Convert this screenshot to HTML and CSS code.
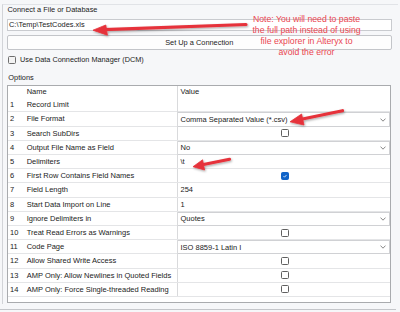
FILE: index.html
```html
<!DOCTYPE html>
<html>
<head>
<meta charset="utf-8">
<link rel="stylesheet" href="styles.css">
</head>
<body>
<div class="page">
  <div class="panel">
    <div class="title">Connect a File or Database</div>
    <div class="input">C:\Temp\TestCodes.xls</div>
    <div class="button">Set Up a Connection</div>
    <div class="check-row"><span class="cb"></span><span>Use Data Connection Manager (DCM)</span></div>
    <div class="section">Options</div>
    <div class="grid">
      <div class="row head"><span class="num"></span><span class="name">Name</span><span class="val">Value</span></div>
      <div class="row"><span class="num">1</span><span class="name">Record Limit</span><span class="val"></span></div>
      <div class="row"><span class="num">2</span><span class="name">File Format</span><span class="val dd"><span>Comma Separated Value (*.csv)</span><svg class="chev" viewBox="0 0 6 4"><polyline points="0.5,0.6 3,3.2 5.5,0.6"/></svg></span></div>
      <div class="row"><span class="num">3</span><span class="name">Search SubDirs</span><span class="val chk"><span class="box"></span></span></div>
      <div class="row"><span class="num">4</span><span class="name">Output File Name as Field</span><span class="val dd"><span>No</span><svg class="chev" viewBox="0 0 6 4"><polyline points="0.5,0.6 3,3.2 5.5,0.6"/></svg></span></div>
      <div class="row"><span class="num">5</span><span class="name">Delimiters</span><span class="val">\t</span></div>
      <div class="row"><span class="num">6</span><span class="name">First Row Contains Field Names</span><span class="val chk"><span class="box on"><svg viewBox="0 0 8 8"><polyline points="2,4.2 3.4,5.6 6,2.6"/></svg></span></span></div>
      <div class="row"><span class="num">7</span><span class="name">Field Length</span><span class="val">254</span></div>
      <div class="row"><span class="num">8</span><span class="name">Start Data Import on Line</span><span class="val">1</span></div>
      <div class="row"><span class="num">9</span><span class="name">Ignore Delimiters in</span><span class="val dd"><span>Quotes</span><svg class="chev" viewBox="0 0 6 4"><polyline points="0.5,0.6 3,3.2 5.5,0.6"/></svg></span></div>
      <div class="row"><span class="num">10</span><span class="name">Treat Read Errors as Warnings</span><span class="val chk"><span class="box"></span></span></div>
      <div class="row"><span class="num">11</span><span class="name">Code Page</span><span class="val dd"><span>ISO 8859-1 Latin I</span><svg class="chev" viewBox="0 0 6 4"><polyline points="0.5,0.6 3,3.2 5.5,0.6"/></svg></span></div>
      <div class="row"><span class="num">12</span><span class="name">Allow Shared Write Access</span><span class="val chk"><span class="box"></span></span></div>
      <div class="row"><span class="num">13</span><span class="name">AMP Only: Allow Newlines in Quoted Fields</span><span class="val chk"><span class="box"></span></span></div>
      <div class="row"><span class="num">14</span><span class="name">AMP Only: Force Single-threaded Reading</span><span class="val chk"><span class="box"></span></span></div>
    </div>
  </div>
  <div class="bottom-line"></div>

  <div class="note">Note: You will need to paste<br>the full path instead of using<br>file explorer in Alteryx to<br>avoid the error</div>

  <svg class="arrows" viewBox="0 0 400 312" width="400" height="312">
    <defs>
      <filter id="sh" x="-20%" y="-50%" width="140%" height="200%">
        <feDropShadow dx="0.8" dy="1.2" stdDeviation="0.8" flood-color="#000" flood-opacity="0.35"/>
      </filter>
    </defs>
    <g filter="url(#sh)" class="arrow">
      <line x1="246" y1="20.5" x2="104" y2="25.6"/>
      <polygon points="93,26.2 107.4,31.2 105.8,21"/>
    </g>
    <g filter="url(#sh)" class="arrow">
      <line x1="342.5" y1="106.7" x2="300" y2="115.5"/>
      <polygon points="290,117.8 304,121 301.6,110"/>
    </g>
    <g filter="url(#sh)" class="arrow">
      <line x1="229.5" y1="155.3" x2="201" y2="161"/>
      <polygon points="193,162.7 204.6,166 202.6,155.8"/>
    </g>
  </svg>
</div>
</body>
</html>
```

FILE: styles.css
```css
* { box-sizing: border-box; }

html, body {
  margin: 0;
  padding: 0;
  width: 400px;
  height: 312px;
  overflow: hidden;
  background: #f6f7f9;
}

.page {
  position: relative;
  width: 400px;
  height: 312px;
  font-family: "Liberation Sans", Arial, sans-serif;
  font-size: 7.4px;
  color: #1b1b1b;
}

.panel {
  margin-top: 4px;
  margin-left: 2px;
  width: 396px;
  height: 300px;
  border-top: 1px solid #e1e3e7;
  border-left: 1px solid #d2d4d8;
  padding-left: 3.5px;
  display: flex;
  flex-direction: column;
}

.title {
  line-height: 9px;
  margin-left: 1px;
}

.input {
  margin-top: 5px;
  width: 385.5px;
  height: 12px;
  border: 1px solid #c9cbcf;
  background: #fff;
  padding-left: 1.5px;
  line-height: 10px;
}

.button {
  margin-top: 4px;
  width: 385.5px;
  height: 15px;
  border: 1px solid #c3c5c9;
  border-radius: 2px;
  background: #fdfdfd;
  text-align: center;
  line-height: 13px;
}

.check-row {
  margin-top: 6px;
  margin-left: 1px;
  height: 8px;
  display: flex;
  align-items: center;
  gap: 4.5px;
  line-height: 8px;
  font-size: 7.3px;
}

.cb {
  width: 8px;
  height: 8px;
  border: 1px solid #6e6e6e;
  border-radius: 1.5px;
  background: #f3f3f3;
}

.section {
  margin-top: 9px;
  margin-left: 1.8px;
  line-height: 9px;
}

.grid {
  margin-top: 3px;
  margin-left: 0.5px;
  width: 384px;
  height: 218px;
  border: 1px solid #a9abae;
  background: #fff;
  font-size: 7.5px;
}

.row {
  display: grid;
  grid-template-columns: 16px 152.5px 1fr;
  height: 14.2px;
  border-bottom: 1px solid #e4e5e7;
  line-height: 13.2px;
}

.row.head {
  height: 12.3px;
  border-bottom: none;
  line-height: 12.3px;
}

.num { padding-left: 2px; }
.name { padding-left: 2.7px; white-space: nowrap; }

.val {
  border-left: 1px solid #d9dadc;
  padding-left: 3px;
  white-space: nowrap;
}

.val.dd {
  display: flex;
  align-items: center;
  justify-content: space-between;
  padding-right: 4px;
  box-shadow: inset 0 1px 0 #d0d1d4, inset -1px 0 0 #d0d1d4, inset 0 -1px 0 #d0d1d4;
  margin-bottom: -1px;
}

.chev {
  width: 6px;
  height: 4px;
  fill: none;
  stroke: #6a6a6a;
  stroke-width: 0.8;
}

.val.chk {
  display: flex;
  align-items: center;
  justify-content: center;
}

.box {
  width: 8px;
  height: 8px;
  border: 1px solid #606060;
  border-radius: 1.5px;
  background: #fff;
  display: flex;
}

.box.on {
  background: #0f63c8;
  border-color: #0f63c8;
}

.box.on svg {
  width: 6px;
  height: 6px;
  fill: none;
  stroke: #fff;
  stroke-width: 1;
}

.bottom-line {
  margin-top: 5px;
  width: 396px;
  border-top: 1px solid #c4c6ca;
}

.note {
  position: absolute;
  left: 236px;
  top: 10.2px;
  width: 141px;
  text-align: center;
  font-size: 8.7px;
  line-height: 11px;
  color: #ea4651;
}

.arrows {
  position: absolute;
  left: 0;
  top: 0;
  pointer-events: none;
}

.arrow line {
  stroke: #e6333b;
  stroke-width: 3.2;
  stroke-linecap: round;
}

.arrow polygon {
  fill: #e6333b;
  stroke: #e6333b;
  stroke-width: 0.8;
  stroke-linejoin: round;
}
```
